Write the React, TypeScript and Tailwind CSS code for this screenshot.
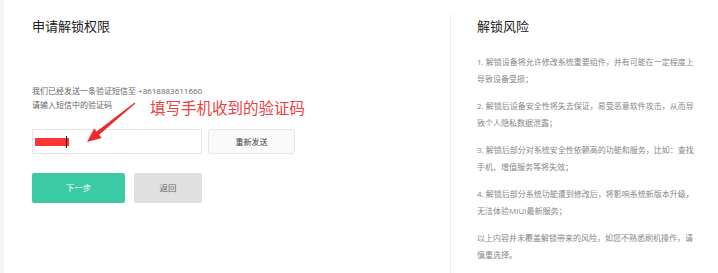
import React from "react";

const font = "font-['Open_Sans','Noto_Sans_CJK_SC',sans-serif]";

export default function App() {
  const risks = [
    "1. 解锁设备将允许修改系统重要组件，并有可能在一定程度上导致设备受损；",
    "2. 解锁后设备安全性将失去保证，易受恶意软件攻击，从而导致个人隐私数据泄露；",
    "3. 解锁后部分对系统安全性依赖高的功能和服务，比如：查找手机、增值服务等将失效；",
    "4. 解锁后部分系统功能遭到修改后，将影响系统新版本升级，无法体验MIUI最新服务；",
    "以上内容并未覆盖解锁带来的风险，如您不熟悉刷机操作，请慎重选择。",
  ];
  return (
    <div className={`${font} w-[718px] h-[273px] bg-white flex overflow-hidden relative`}>
      <div className="w-[4px] h-full bg-[#f6f6f6]" />
      <div className="w-[446px] pl-[28px] pt-[18px] flex flex-col">
        <h1 className="text-[13px] leading-[16px] text-[#222] font-normal">申请解锁权限</h1>
        <div className="mt-[50px] text-[8px] leading-[14px] text-[#666]">
          <p>我们已经发送一条验证短信至 +8618883611660</p>
          <p>请输入短信中的验证码</p>
        </div>
        <div className="mt-[17px] flex gap-[6px]">
          <div className="w-[170px] h-[25px] border border-[#e6e6e6] bg-white flex items-center pl-[2px]">
            <div className="w-[34px] h-[8px] bg-[#ff3535]" />
            <div className="w-[1px] h-[12px] bg-[#222] -ml-[3px]" />
          </div>
          <button className="w-[87px] h-[25px] border border-[#e8e8e8] bg-[#fafafa] rounded-[3px] text-[8px] text-[#444]">
            重新发送
          </button>
        </div>
        <div className="mt-[19px] flex gap-[9px]">
          <button className="w-[93px] h-[30px] bg-[#3acaa5] rounded-[2px] text-[8.5px] text-white">
            下一步
          </button>
          <button className="w-[68px] h-[30px] bg-[#e0e0e0] rounded-[2px] text-[8.5px] text-[#666]">
            返回
          </button>
        </div>
      </div>
      <div className="mt-[14px] border-l border-[#eeeeee] pl-[26px] pt-[4px] flex-1">
        <h2 className="text-[13px] leading-[16px] text-[#222] font-normal">解锁风险</h2>
        <div className="mt-[20px] w-[222px] text-[8px] leading-[16.5px] text-[#888]">
          {risks.map((r, i) => (
            <p key={i} className="mb-[11px]">{r}</p>
          ))}
        </div>
      </div>

      <div className="absolute left-[150px] top-[97px] text-[15.5px] leading-[20px] text-[#f04040] font-['Noto_Sans_CJK_SC',sans-serif]">
        填写手机收到的验证码
      </div>
      <svg className="absolute left-[80px] top-[95px]" width="60" height="55" viewBox="0 0 60 55">
        <polygon
          points="55.3,8.4 19.2,39.8 21.7,42.9 7,47 14.1,33.5 16.6,36.6 54.7,7.6"
          fill="#ee2b2b"
        />
      </svg>
    </div>
  );
}
